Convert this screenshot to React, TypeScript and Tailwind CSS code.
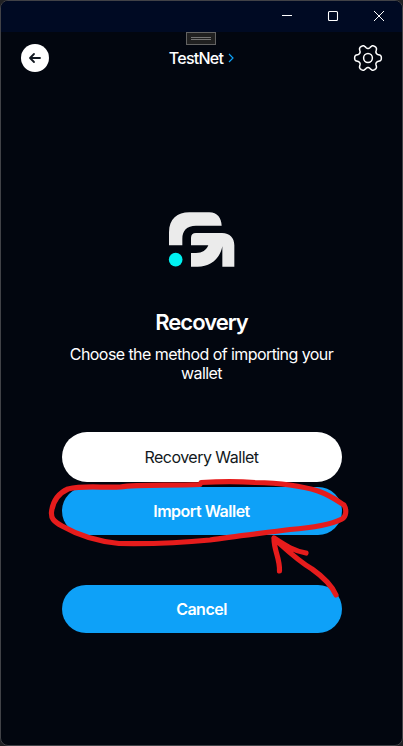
import React from "react";

const gearPoints = Array.from({ length: 144 }, (_, i) => {
  const a = (i / 144) * Math.PI * 2;
  const r = 11.3 + 2.2 * Math.tanh(1.4 * (Math.cos(6 * a) + 0.2));
  return `${(15 + r * Math.cos(a)).toFixed(2)},${(15 + r * Math.sin(a)).toFixed(2)}`;
}).join(" ");

function TitleBar() {
  return (
    <header className="flex h-[31px] shrink-0 justify-end bg-[#000a23]">
      <svg width="138" height="31" viewBox="0 0 138 31" fill="none" stroke="#fff">
        <path d="M18 14.5H28" />
        <rect x="64.5" y="10.5" width="9" height="9" rx="1" strokeWidth="1.1" />
        <path d="M110 10l10 10M120 10l-10 10" strokeWidth="1" />
      </svg>
    </header>
  );
}

function Logo() {
  return (
    <svg width="100" height="80" viewBox="0 0 300 240" className="ml-[149px]">
      <path fill="#ebebeb" d="M57 136V97C57 57 82 37 118 37H178C202 37 214 54 215 77H138C110 77 97 92 97 117V136Z" />
      <path fill="#ebebeb" d="M123 114Q123 99 138 99H216C240 99 253 114 253 136V200H217V139C210 176 182 200 143 200H123V159H138C157 159 169 151 175 136H123Z" />
      <circle cx="77" cy="179" r="20.5" fill="#00f0f0" />
    </svg>
  );
}

function Annotation() {
  return (
    <svg
      className="pointer-events-none absolute inset-0"
      width="403"
      height="746"
      viewBox="0 0 403 746"
      fill="none"
      stroke="#e61c1c"
      strokeWidth="5.2"
      strokeLinecap="round"
      strokeLinejoin="round"
    >
      <path d="M201 482.5C220 481.500 240 481.500 255 482.500C280 483 302 486 318 491C332 496 339 502 344 505C347 510 346 517 342 519C330 525 310 528 290 529.500C265 533 235 536 210 540C180 543 150 544 119 543.500C94 541 76 534 62 526C53 521 51 518 51.500 512C53 500 59 493 68 489C84 485 103 488 120 487C140 484 170 486 200 484.500" />
      <path d="M336 595C331 584 322 576 312 569C298 561 289 552 274 538.500C274 551 280 558 279.500 571M274 538C286 546 294 551 306 553" />
    </svg>
  );
}

export default function App() {
  return (
    <div className="h-[746px] w-[403px] overflow-hidden bg-[#202124] font-['Inter','Liberation_Sans',sans-serif] text-white">
      <div className="relative flex h-[746px] flex-col overflow-hidden rounded-[8px] border border-[#414247] bg-[#02060f]">
        <TitleBar />
        <nav className="grid h-[52px] shrink-0 grid-cols-3 items-center px-5">
          <button aria-label="Back" className="flex h-7 w-7 items-center justify-center rounded-full bg-white">
            <svg width="14" height="12" viewBox="0 0 14 12" fill="none" stroke="#111820" strokeWidth="1.8" strokeLinecap="round" strokeLinejoin="round">
              <path d="M12 6H2.500M6 2L2 6L6 10" />
            </svg>
          </button>
          <div className="flex items-center justify-center gap-[5px] text-base font-medium tracking-[-0.75px]">
            <span>TestNet</span>
            <svg width="6" height="10" viewBox="0 0 6 10" fill="none" stroke="#0ea1f5" strokeWidth="1.2">
              <path d="M1 1l4 4-4 4" />
            </svg>
          </div>
          <svg width="30" height="30" viewBox="0 0 30 30" fill="none" stroke="#fff" strokeWidth="1.5" className="-mr-px justify-self-end">
            <polygon points={gearPoints} strokeLinejoin="round" />
            <circle cx="15" cy="15" r="4.400" />
          </svg>
        </nav>
        <main className="flex flex-col pt-[116px]">
          <Logo />
          <h1 className="mt-[28px] text-center text-[22px] leading-7 font-semibold tracking-[-1px]">Recovery</h1>
          <p className="mx-auto mt-[9px] w-[280px] text-center text-base leading-[19px] tracking-[-0.57px]">
            Choose the method of importing your wallet
          </p>
          <div className="mx-auto mt-[49px] flex w-[280px] flex-col text-base">
            <button className="h-[50px] rounded-full bg-white tracking-[-0.52px] text-[#111820]">Recovery Wallet</button>
            <button className="mt-[5px] h-12 rounded-full bg-[#0ea1f8] font-semibold tracking-[-0.5px]">Import Wallet</button>
            <button className="mt-[50px] h-12 rounded-full bg-[#0ea1f8] font-semibold tracking-[-0.5px]">Cancel</button>
          </div>
        </main>
        <div className="absolute top-[31px] left-[185px] flex h-[13px] w-[30px] flex-col items-center justify-center gap-[1px] border border-[#626262] bg-[#202020]">
          <span className="h-px w-[20px] bg-[#747474]" />
          <span className="h-px w-[20px] bg-[#747474]" />
        </div>
      </div>
      <Annotation />
    </div>
  );
}
